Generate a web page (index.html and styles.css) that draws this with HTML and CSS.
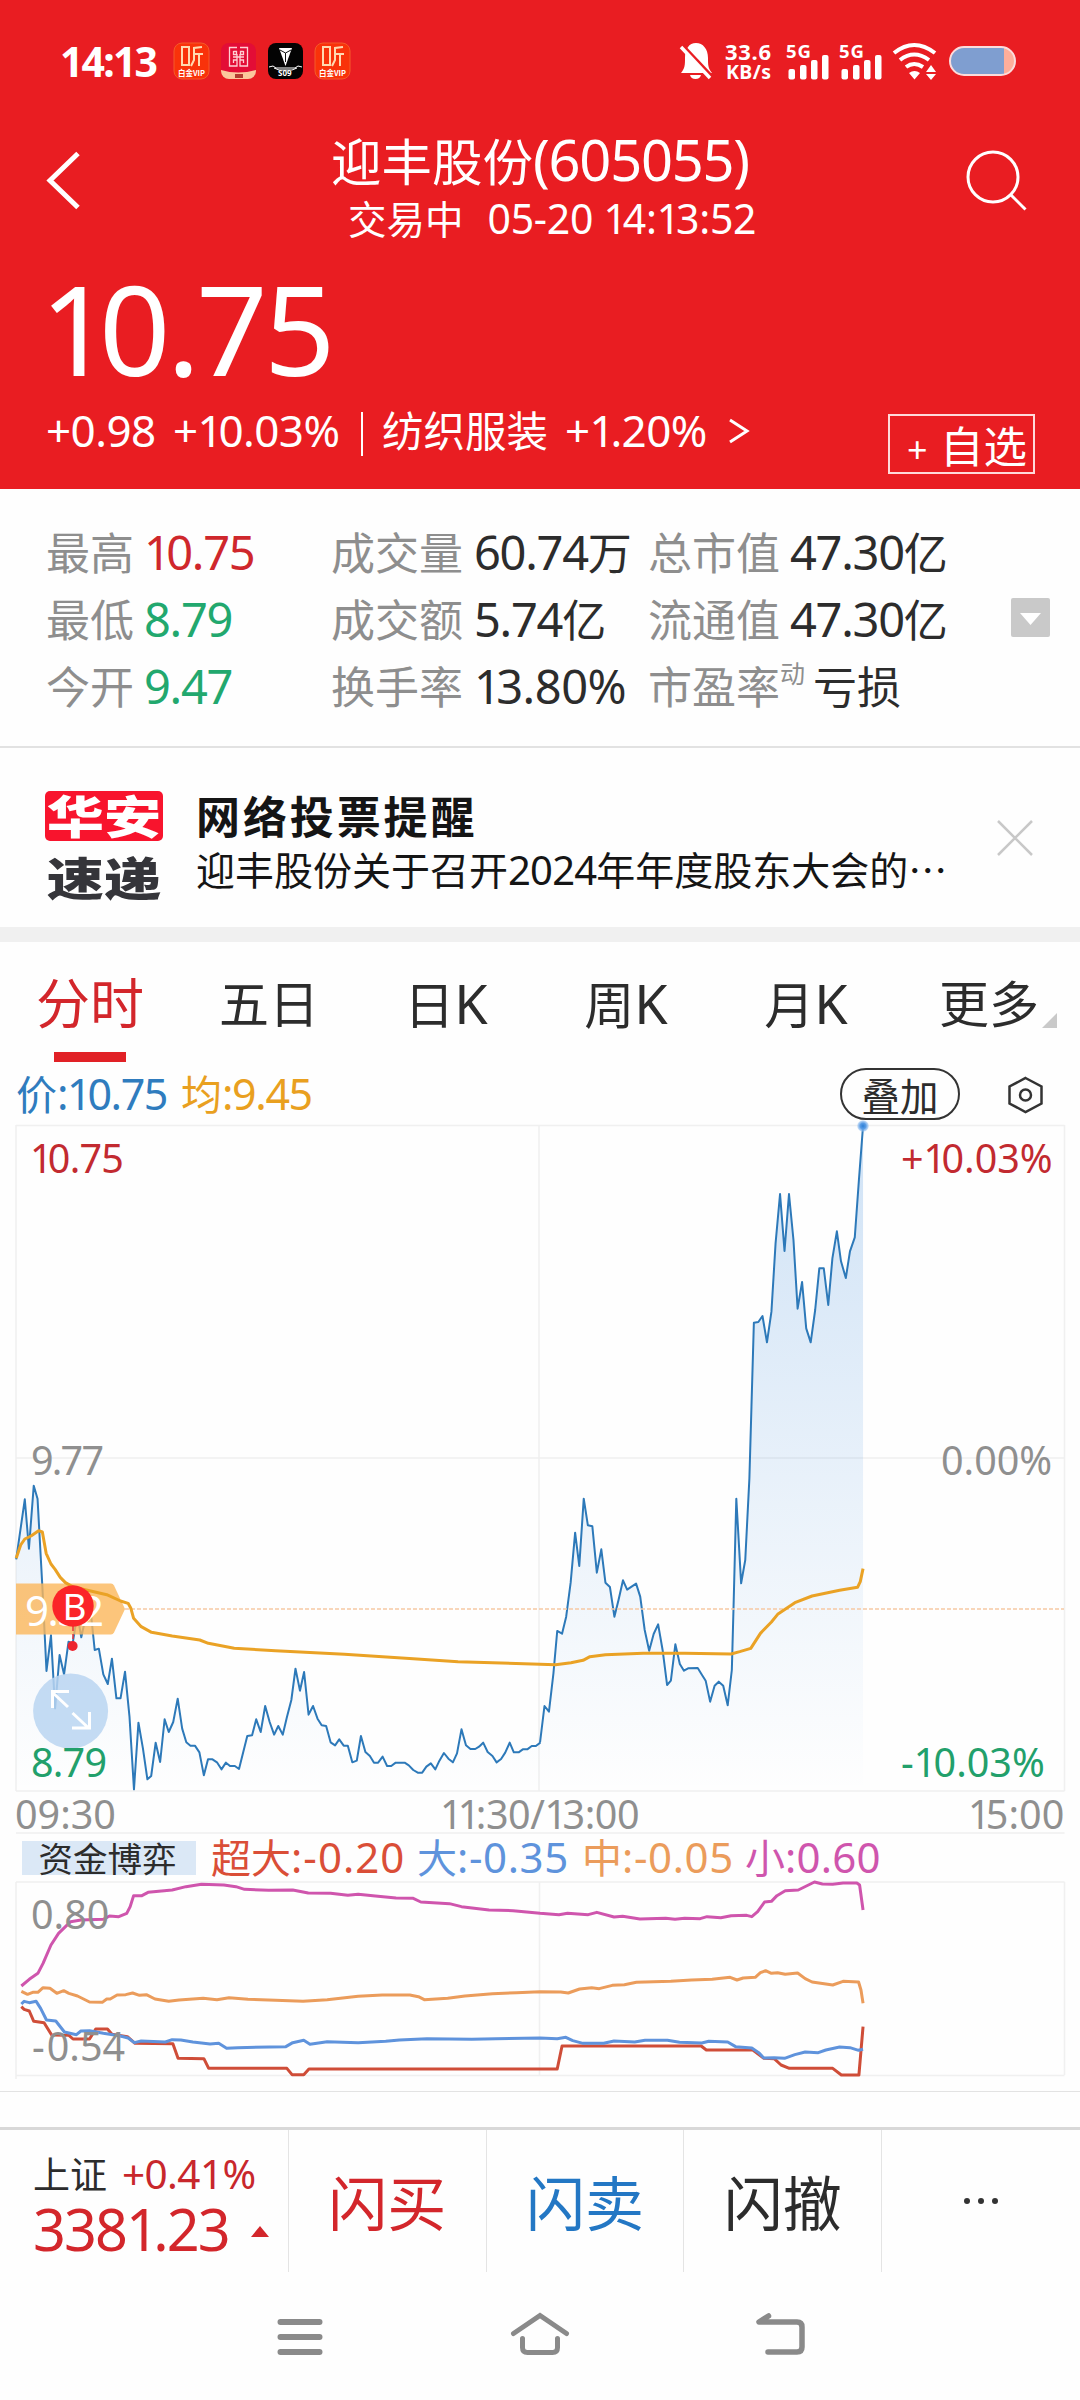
FILE: index.html
```html
<!DOCTYPE html>
<html lang="zh-CN">
<head>
<meta charset="utf-8">
<title>迎丰股份(605055)</title>
<link rel="stylesheet" href="styles.css">
</head>
<body>
<header class="header">
  <div class="status">
    <span class="clock n">14:13</span>
    <div class="apps">
      <svg width="35" height="36" viewBox="0 0 35 36"><rect width="35" height="36" rx="8" fill="#f9320a" stroke="#f55a2a"/><path d="M8 4h7v18H8zM28 4l-8 1v12l-3 6M20 11h9M25 11v12" fill="none" stroke="#ffd9b0" stroke-width="2"/><text x="4" y="33" class="vip" textLength="27" lengthAdjust="spacingAndGlyphs">白金VIP</text></svg>
      <svg width="35" height="36" viewBox="0 0 35 36"><defs><clipPath id="app"><rect width="35" height="36" rx="8"/></clipPath></defs><g clip-path="url(#app)"><rect width="35" height="36" fill="#e30d36"/><path d="M0 27q17 5 35 0v9H0z" fill="#fbc79b"/><path d="M16 4.500H8.500v18.500H16v-6h-3.500v3M19 4.500h7.500v18.500H19v-6h3.500v3M12.500 8v3.500h3v-3h-3M22.500 8v3.500h-3v-3h3M12 14h11M16 11v6M19 11v6" fill="none" stroke="#ffd0d4" stroke-width="1.300"/><path d="M14 31h8v4h-8z" fill="#b13c30"/></g></svg>
      <svg width="35" height="36" viewBox="0 0 35 36"><rect width="35" height="36" rx="8" fill="#030303"/><path d="M11 5h13l-6.500 18z" fill="#fff"/><path d="M12 7l5.500 3 5.500-3M17.500 10v9" stroke="#111" fill="none"/><path d="M1 24l4-1 3 2h19l3-2 4 1M6 25l5 2h13l5-2" fill="none" stroke="#fff"/><text x="10" y="33" class="app-no">S09</text></svg>
      <svg width="35" height="36" viewBox="0 0 35 36"><rect width="35" height="36" rx="8" fill="#f9320a" stroke="#f55a2a"/><path d="M8 4h7v18H8zM28 4l-8 1v12l-3 6M20 11h9M25 11v12" fill="none" stroke="#ffd9b0" stroke-width="2"/><text x="4" y="33" class="vip" textLength="27" lengthAdjust="spacingAndGlyphs">白金VIP</text></svg>
    </div>
    <svg class="signals" width="340" height="42" viewBox="678 40 340 42">
      <path d="M681 73c4-5 4-8 4-15 0-9 4-15 11-15s12 6 12 15c0 7 0 10 4 15z" fill="#fff"/>
      <path d="M690 75h11q-1 4-5.500 4t-5.500-4z" fill="#fff"/>
      <path d="M683 46l31 33" stroke="#e91d22" stroke-width="4"/><path d="M681 47l29 31" stroke="#fff" stroke-width="3.500"/>
      <text x="725" y="59.500" class="net" font-size="22" textLength="46">33.6</text>
      <text x="726" y="78.500" class="net" font-size="19.500" textLength="45">KB/s</text>
      <g fill="#fff"><text x="786" y="57.500" class="net" font-size="18.500" textLength="25">5G</text><rect x="788.500" y="69" width="6.500" height="10.500" rx="2"/><rect x="800" y="65" width="6.500" height="14.500" rx="2"/><rect x="811" y="60" width="6.500" height="19.500" rx="2"/><rect x="822" y="55" width="6.500" height="24.500" rx="2"/></g>
      <g transform="translate(53 0)" fill="#fff"><text x="786" y="57.500" class="net" font-size="18.500" textLength="25">5G</text><rect x="788.500" y="69" width="6.500" height="10.500" rx="2"/><rect x="800" y="65" width="6.500" height="14.500" rx="2"/><rect x="811" y="60" width="6.500" height="19.500" rx="2"/><rect x="822" y="55" width="6.500" height="24.500" rx="2"/></g>
      <path d="M894 53q20-16 41 0M900 60q14-11 29 0M906 67q8-6 17 0" fill="none" stroke="#fff" stroke-width="4"/>
      <path d="M909 73q5.500-4 11 0l-5.500 6.500zM926 72h10l-5-7zM926 74h10l-5 6z" fill="#fff"/>
      <rect x="950" y="47" width="65" height="28" rx="14" fill="#feae9b"/><path d="M964 47h40v28h-40a14 14 0 0 1 0-28z" fill="#7f9ed0"/><rect x="950" y="47" width="65" height="28" rx="14" fill="none" stroke="#fbdcdc" stroke-width="2"/>
    </svg>
  </div>
  <div class="titlebar">
    <svg width="100" height="130" viewBox="0 122 100 130"><path d="M78 153.500L50 180.500l28 27" fill="none" stroke="#fff" stroke-width="5"/></svg>
    <div class="titles">
      <h1>迎丰股份<span class="n">(605055)</span></h1>
      <p>交易中<span class="n date">05-20 <i>1</i>4:<i>1</i>3:52</span></p>
    </div>
    <svg width="100" height="130" viewBox="951 122 100 130"><circle cx="993" cy="177" r="25" fill="none" stroke="#fff" stroke-width="3"/><path d="M1011 195l14.500 14.500" stroke="#fff" stroke-width="3"/></svg>
  </div>
  <div class="price n"><i>1</i>0.75</div>
  <div class="change">
    <span class="n">+0.98</span>
    <span class="n">+<i>1</i>0.03%</span>
    <span class="bar"></span>
    <span>纺织服装</span>
    <span class="n">+<i>1</i>.20%</span>
    <svg width="24" height="40" viewBox="728 410 24 40"><path d="M731 420l17 11-17 11" fill="none" stroke="#fff" stroke-width="3"/></svg>
    <button><span class="plus n">+</span>自选</button>
  </div>
</header>

<section class="stats">
  <dl>
    <dt>最高</dt><dd class="n red"><i>1</i>0.75</dd><dt>成交量</dt><dd><span class="n">60.74</span>万</dd><dt>总市值</dt><dd><span class="n">47.30</span>亿</dd>
    <dt>最低</dt><dd class="n green">8.79</dd><dt>成交额</dt><dd><span class="n">5.74</span>亿</dd><dt>流通值</dt><dd><span class="n">47.30</span>亿</dd>
    <dt>今开</dt><dd class="n green">9.47</dd><dt>换手率</dt><dd class="n rate"><i>1</i>3.80%</dd><dt>市盈率<sup>动</sup></dt><dd class="loss">亏损</dd>
  </dl>
  <svg width="39" height="39" viewBox="0 0 39 39"><rect width="39" height="39" rx="2" fill="#c9c9c9"/><path d="M9 15h21l-10.500 12z" fill="#fff"/></svg>
</section>

<section class="notice">
  <div class="logo"><b><span>华安</span></b><b><span>速递</span></b></div>
  <div class="message">
    <h2>网络投票提醒</h2>
    <p>迎丰股份关于召开<span class="n">2024</span>年年度股东大会的…</p>
  </div>
  <svg width="36" height="36" viewBox="0 0 36 36"><path d="M1 1l34 34M35 1L1 35" stroke="#c8c8c8" stroke-width="2.500"/></svg>
</section>

<nav class="tabs">
  <a class="active">分时</a><a>五日</a><a class="k">日<span class="n">K</span></a><a class="k">周<span class="n">K</span></a><a class="k">月<span class="n">K</span></a>
  <a>更多<svg width="15" height="15" viewBox="0 0 15 15"><path d="M15 0v15H0z" fill="#c9c9c9"/></svg></a>
</nav>

<div class="legend">
  <span class="blue">价<span class="n">:<i>1</i>0.75</span></span>
  <span class="amber">均<span class="n">:9.45</span></span>
  <button>叠加</button>
  <svg width="36" height="38" viewBox="1008 1075 36 38"><path d="M1025.500 1077l16 8.500v17l-16 8.500-16-8.500v-17z" fill="none" stroke="#333" stroke-width="2.500"/><circle cx="1025.500" cy="1094" r="5.500" fill="none" stroke="#333" stroke-width="2.500"/></svg>
</div>

<svg class="chart" width="1080" height="714" viewBox="0 1120 1080 714">
  <defs>
    <linearGradient id="fade" gradientUnits="userSpaceOnUse" x1="0" y1="-942" x2="0" y2="1053"><stop offset="0" stop-color="#2b80d8" stop-opacity=".22"/><stop offset="1" stop-color="#2b80d8" stop-opacity="0"/></linearGradient>
    <radialGradient id="glow"><stop offset="0" stop-color="#2d7fd6"/><stop offset=".5" stop-color="#5a9de6"/><stop offset="1" stop-color="#9cc5f2" stop-opacity=".5"/></radialGradient>
  </defs>
  <path class="grid" d="M16 1125.500H1064.500M16 1458H1064.500M16 1791H1064.500M16 1833H1064.500M16 1125V1791M539 1125V1791M1064.500 1125V1791"/>
  <g transform="translate(0 1440) scale(.34439 .33333)">
    <path fill="url(#fade)" d="M47 358L72 178 84 326 98 137 109 176 123 440 135 693 148 586 160 805 173 645 186 703 199 605 211 610 218 565 224 520 236 592 249 530 262 500 275 630 287 626 300 703 313 732 325 656 338 775 350 775 363 695 376 830 389 1048 402 848 415 925 428 1018 439 1008 452 908 465 966 478 838 490 876 503 846 516 776 529 866 541 907 566 917 579 937 592 1006 604 958 617 958 643 988 656 968 694 987 718 888 732 886 744 838 757 876 770 798 796 884 808 858 821 884 846 780 858 686 871 752 883 696 896 824 909 798 922 836 947 858 960 907 973 916 985 898 1010 917 1023 967 1036 962 1048 888 1061 936 1098 968 1111 950 1124 978 1175 968 1213 998 1251 970 1264 988 1289 939 1315 967 1327 940 1340 868 1353 916 1380 927 1403 908 1442 967 1480 908 1492 937 1568 908V1053H47z"/>
    <path class="line price-line" d="M47 358L72 178 84 326 98 137 109 176 123 440 135 693 148 586 160 805 173 645 186 703 199 605 211 610 218 565 224 520 236 592 249 530 262 500 275 630 287 626 300 703 313 732 325 656 338 775 350 775 363 695 376 830 389 1048 402 848 415 925 428 1018 439 1008 452 908 465 966 478 838 490 876 503 846 516 776 529 866 541 907 553 917 566 917 579 937 592 1006 604 958 617 958 630 967 643 988 656 968 668 978 682 978 694 987 718 888 732 886 744 838 757 876 770 798 783 846 796 884 808 858 821 884 833 832 846 780 858 686 871 752 883 696 896 824 909 798 922 836 934 856 947 858 960 907 973 916 985 898 998 917 1010 917 1023 967 1036 962 1048 888 1061 936 1074 948 1086 968 1098 968 1111 950 1124 978 1136 978 1149 968 1175 968 1187 976 1200 990 1213 998 1226 998 1238 980 1251 970 1264 988 1276 962 1289 939 1302 956 1315 967 1327 940 1340 868 1353 916 1366 927 1380 927 1391 920 1403 908 1416 936 1430 948 1442 967 1455 957 1467 938 1480 908 1492 937 1506 937 1518 928 1531 928 1544 918 1556 918 1569 908"/>
    <g transform="translate(1568 0)">
      <path fill="url(#fade)" d="M0 908L13 798 26 815 39 700 50 573 64 581 76 530 89 428 102 278 114 378 127 176 139 256 152 259 165 398 178 328 190 428 203 441 216 530 228 480 241 421 253 449 279 431 291 470 304 570 317 632 330 582 343 553 356 630 369 735 380 722 393 613 406 672 418 692 430 685 458 684 470 704 481 722 494 785 507 737 519 725 532 737 545 796 557 690 562 500 570 176 584 430 596 360 608 115 614 -100 621 -352 634 -354 646 -372 659 -293 672 -385 684 -590 697 -738 710 -567 723 -738 736 -600 748 -394 761 -474 773 -335 786 -293 799 -390 811 -515 824 -515 837 -405 849 -545 862 -626 874 -536 888 -486 900 -566 914 -608 926 -780 938 -942V1053H0z"/>
      <path class="line price-line" d="M0 908L13 798 26 815 39 700 50 573 64 581 76 530 89 428 102 278 114 378 127 176 139 256 152 259 165 398 178 328 190 428 203 441 216 530 228 480 241 421 253 449 279 431 291 470 304 570 317 632 330 582 343 553 356 630 369 735 380 722 393 613 406 672 418 692 430 685 458 684 470 704 481 722 494 785 507 737 519 725 532 737 545 796 557 690 562 500 570 176 584 430 596 360 608 115 614 -100 621 -352 634 -354 646 -372 659 -293 672 -385 684 -590 697 -738 710 -567 723 -738 736 -600 748 -394 761 -474 773 -335 786 -293 799 -390 811 -515 824 -515 837 -405 849 -545 862 -626 874 -536 888 -486 900 -566 914 -608 926 -780 938 -942"/>
    </g>
  </g>
  <path d="M125 1609H1064" stroke="#f6c9a4" stroke-width="1.500" stroke-dasharray="4 2"/>
  <path d="M16 1583.500h95q2 0 3 2l11 23.500-11 23.500q-1 2-3 2H16z" fill="#fbb75a" fill-opacity=".8"/>
  <text x="25" y="1626" class="num" fill="#fff" font-size="42" textLength="79">9.32</text>
  <g transform="translate(0 1440) scale(.34439 .33333)">
    <path class="line avg-line" d="M47 355L60 315 72 297 90 288 112 272 123 276 134 340 148 372 160 388 175 412 190 428 210 440 260 452 310 464 350 483 372 490 380 505 388 535 410 560 440 577 500 588 580 600 605 610 680 625 800 632 1000 643 1200 656 1330 665 1568 673 1613 674 1658 668 1693 661 1713 650 1758 644 1868 640 1988 640 2123 642 2148 635 2180 625 2208 580 2240 546 2258 523 2308 488 2358 468 2438 451 2490 442 2498 425 2506 386"/>
  </g>
  <circle cx="70.600" cy="1711" r="37.500" fill="#bad5f1" fill-opacity=".85"/>
  <path d="M68 1707l-16-15M52.500 1708v-16.500H69M72.500 1713l16 15M72 1728h17.500v-16" fill="none" stroke="#fff" stroke-width="3"/>
  <path d="M73 1626v18" stroke="#e5333b" stroke-width="1.500" stroke-dasharray="5 3"/><circle cx="72.600" cy="1646" r="5" fill="#ed2630"/>
  <circle cx="73" cy="1606" r="20.700" fill="#fb2428"/><text x="74.500" y="1620" class="num" fill="#fff" font-size="37" text-anchor="middle">B</text>
  <circle cx="863" cy="1126" r="5.800" fill="url(#glow)"/>
  <g class="num" font-size="39.500">
    <g fill="#c22a30"><text x="30" y="1172.500" class="tight"><tspan class="o">1</tspan>0.75</text><text x="901" y="1172.500">+<tspan class="o">1</tspan>0.03%</text></g>
    <g fill="#8f8f8f"><text x="31" y="1474.500" textLength="73">9.77</text><text x="941" y="1474.500">0.00%</text><text x="15" y="1828.500">09:30</text><text x="440" y="1828.500" class="slim"><tspan class="o">11</tspan>:30/<tspan class="o">1</tspan>3:00</text><text x="968" y="1828.500"><tspan class="o">1</tspan>5:00</text></g>
    <g fill="#22a06b"><text x="31" y="1776.500" textLength="76">8.79</text><text x="901" y="1776.500">-<tspan class="o">1</tspan><tspan dx="2">0.03%</tspan></text></g>
  </g>
</svg>

<div class="funds">
  <span class="tag">资金博弈</span>
  <span class="huge">超大<span class="n">:-0.20</span></span>
  <span class="large">大<span class="n">:-0.35</span></span>
  <span class="mid">中<span class="n">:-0.05</span></span>
  <span class="small">小<span class="n">:0.60</span></span>
</div>

<svg class="chart" width="1080" height="211" viewBox="0 1881 1080 211">
  <path class="grid" d="M16 1882H1064.500M16 2075.500H1064.500M16 1882V2079M539.500 1882V2075M1064.500 1882V2075"/>
  <path d="M0 2091.500H1080" stroke="#e3e3e3"/>
  <g transform="translate(0 1830) scale(.34439 .33333)">
    <path class="line fund" stroke="#cf4d38" d="M62 530L70 538 85 543 98 574 128 578 150 615 200 616 212 627 260 627 278 597 312 597 325 613 370 620 392 640 502 641 517 685 592 686 606 715 833 715 848 734 882 734 897 717 1618 717 1632 648 2036 648 2051 660 2186 660 2218 685 2248 686 2268 705 2292 715 2418 715 2443 735 2494 735 2506 590"/>
    <path class="line fund" stroke="#5f93dc" d="M62 522L70 514 85 518 105 514 118 535 135 570 162 573 187 606 222 614 235 603 260 602 300 610 350 618 372 624 390 638 410 633 480 636 500 629 525 630 560 636 610 642 635 640 658 655 690 653 830 650 850 638 882 631 900 643 950 635 1040 638 1120 634 1160 630 1240 626 1370 628 1440 626 1568 624 1618 626 1643 622 1663 632 1693 640 1753 640 1783 633 1843 636 1873 631 1938 631 1973 637 2038 639 2058 634 2113 636 2136 650 2183 654 2203 668 2218 684 2248 683 2278 685 2308 674 2338 666 2376 668 2398 660 2438 651 2468 653 2493 661 2506 658"/>
    <path class="line fund" stroke="#eb9c5b" d="M62 484L80 493 95 487 110 487 125 473 145 475 165 490 185 482 200 490 225 498 260 516 297 517 310 507 320 507 340 495 365 494 385 489 405 496 425 494 450 507 490 514 520 510 590 505 630 509 665 503 720 508 800 511 880 514 950 509 1040 499 1110 495 1190 495 1215 500 1232 509 1300 505 1350 498 1430 491 1500 488 1568 485 1628 486 1650 489 1683 477 1718 473 1740 476 1778 466 1813 464 1848 457 1948 454 2008 450 2068 448 2120 442 2140 450 2158 444 2193 442 2208 428 2223 422 2240 430 2258 428 2280 433 2316 429 2338 446 2358 456 2418 465 2448 454 2493 456 2500 480 2506 520"/>
    <path class="line fund" stroke="#cf55ad" d="M62 468L85 448 110 430 125 400 148 345 170 310 205 275 235 270 300 268 318 258 345 260 368 250 378 230 388 197 412 197 430 187 500 180 540 170 585 163 650 165 685 170 710 178 780 181 850 180 895 189 960 190 1010 196 1040 193 1090 198 1150 204 1200 205 1222 216 1305 221 1340 230 1420 240 1490 242 1568 250 1623 254 1648 250 1708 254 1733 247 1783 261 1808 259 1858 267 1933 265 1960 268 1988 265 2033 266 2053 260 2093 263 2123 257 2168 256 2183 260 2200 245 2220 216 2240 214 2256 197 2280 182 2318 180 2365 156 2388 162 2418 163 2448 159 2488 159 2496 165 2506 240"/>
  </g>
  <g class="num" font-size="39.500" fill="#8f8f8f"><text x="31" y="1929">0.80</text><text x="32" y="2061">-<tspan dx="2">0.54</tspan></text></g>
</svg>

<footer class="actions">
  <div class="index">
    <p class="index-name">上证<span class="n">+0.41%</span></p>
    <p class="index-value n">338<i>1</i>.23<svg width="18" height="11" viewBox="0 0 18 11"><path d="M9 0l9 11H0z" fill="#d3262b"/></svg></p>
  </div>
  <a class="buy">闪买</a><a class="sell">闪卖</a><a>闪撤</a>
  <a class="more"><svg width="36" height="8" viewBox="0 0 36 8"><g fill="#333"><circle cx="4" cy="4" r="3"/><circle cx="18" cy="4" r="3"/><circle cx="32" cy="4" r="3"/></g></svg></a>
</footer>

<nav class="system">
  <svg width="240" height="60" viewBox="180 2304 240 60"><path d="M280.500 2322H319.500M280.500 2337H319.500M280.500 2352H319.500" stroke="#8a8a8a" stroke-width="6" stroke-linecap="round"/></svg>
  <svg width="240" height="60" viewBox="420 2304 240 60"><path d="M513.500 2333.500L540 2315.500l26.500 18M522.500 2338.500v9q0 5 5 5h25q5 0 5-5v-9" fill="none" stroke="#8a8a8a" stroke-width="5" stroke-linecap="round"/></svg>
  <svg width="240" height="60" viewBox="660 2304 240 60"><path d="M768.500 2316l-9.500 6h38q5 0 5 5v20q0 5-5 5h-29" fill="none" stroke="#8a8a8a" stroke-width="5.500" stroke-linecap="round" stroke-linejoin="round"/></svg>
</nav>
</body>
</html>
```
FILE: styles.css
```css
* { box-sizing: border-box; margin: 0; padding: 0; }
body { width: 1080px; height: 2400px; background: #fefefe; color: #2c2c2c; font-family: "Noto Sans CJK SC", sans-serif; line-height: 1; white-space: nowrap; overflow: hidden; }
svg { display: block; flex: none; overflow: visible; }
button { font: inherit; background: none; border: 0; color: inherit; white-space: nowrap; }
i { font-style: normal; letter-spacing: -.1em; }
.n, .num { font-family: "Noto Sans", "Noto Sans CJK SC", sans-serif; }
.n { letter-spacing: -.02em; }

.header { height: 489px; background: #e91d22; color: #fff; }
.status { display: flex; align-items: center; height: 122px; padding: 0 62px 0 60px; }
.clock { width: 114px; font-size: 41px; font-weight: 700; letter-spacing: -.045em; }
.apps { display: flex; gap: 12px; }
.vip { font: 700 8px "Noto Sans CJK SC", sans-serif; fill: #fff; }
.app-no { font: 700 8px "Noto Sans", sans-serif; fill: #fff; }
.net { font-family: "Noto Sans", sans-serif; font-weight: 700; fill: #fff; }
.signals { margin-left: auto; }

.titlebar { display: grid; grid-template-columns: 100px 1fr 100px; padding-right: 29px; height: 130px; }
.titles { padding-top: 9px; }
h1 { height: 67px; padding-left: 231px; font-size: 50.500px; font-weight: 400; }
h1 .n { font-size: 56px; letter-spacing: -.022em; }
.titles p { display: flex; align-items: baseline; padding-left: 248px; font-size: 38.500px; }
.date { margin-left: 24px; font-size: 41px; letter-spacing: -.007em; }

.price { height: 138px; padding: 13px 0 0 40px; font-size: 125px; letter-spacing: -.031em; }
.change { display: grid; grid-template-columns: 127px 188px 21px 183px 162px 160px 147px; align-items: baseline; height: 99px; padding: 18px 0 0 46px; font-size: 41.500px; }
.change .n { font-size: 44px; letter-spacing: -.013em; }
.bar { align-self: start; width: 2px; height: 44px; margin-top: 4px; background: #fff; }
.change svg { align-self: start; margin-top: 2px; }
.change button { display: flex; align-self: start; align-items: baseline; width: 147px; height: 60px; margin: 6px 0 0 1px; padding: 7px 0 0 17px; border: 2px solid #ffdada; font-size: 43.500px; }
.change .plus { width: 33px; font-size: 36px; text-align: left; }

.stats { display: flex; height: 259px; padding: 40px 30px 0 46px; border-bottom: 2px solid #e2e2e2; }
dl { display: grid; flex: 1; grid-template-columns: 99px 186px 144px 173px 143px 1fr; grid-auto-rows: 67px; align-items: baseline; font-size: 44px; }
dt { color: #8e8e8e; }
dd.n, dd .n { font-size: 47px; letter-spacing: -.027em; }
dd { margin-left: -1px; }
dd.rate { letter-spacing: -.01em; }
sup { display: inline-block; width: 0; font-size: 25px; line-height: 0; vertical-align: 21px; }
.loss { padding-left: 23px; }
.stats > svg { margin-top: 69px; }
.red { color: #cf272c; }
.green { color: #22a86e; }

.notice { display: flex; height: 194px; padding: 43px 47px 0 45px; border-bottom: 15px solid #f0f0f0; color: #151515; }
.logo { width: 118px; }
.logo b { display: block; height: 50px; border-radius: 5px; color: #35353a; font-size: 45px; font-weight: 900; line-height: 47px; }
.logo b:first-child { margin-bottom: 12px; background: #f8142d; color: #fff; }
.logo span { display: block; width: 90px; margin-left: 14px; transform: scaleX(1.270); }
.message { flex: 1; padding-left: 33px; }
h2 { height: 58px; font-size: 44px; font-weight: 700; letter-spacing: 2.900px; padding-top: 2px; }
.message p { font-size: 39px; }
.message .n { font-size: 40px; }
.notice > svg { margin-top: 29px; }

.tabs { display: flex; height: 120px; }
.tabs a { position: relative; width: 180px; padding: 34px 2px 0 0; font-size: 50px; text-align: center; }
.tabs .k { padding-right: 9px; }
.tabs .n { font-size: 54px; }
.tabs a.active { color: #d3262b; font-size: 54px; padding: 32px 0 0; }
.tabs .active::after { content: ""; position: absolute; left: 54px; bottom: 0; width: 72px; height: 10px; background: #e12126; }
.tabs svg { position: absolute; right: 23px; top: 71px; }

.legend { display: grid; grid-template-columns: 165px 659px 168px 36px; height: 58px; padding: 6px 0 0 16px; font-size: 41px; }
.legend > span { padding-top: 4px; }
.legend .n { font-size: 43px; letter-spacing: -.033em; }
.blue { color: #2f7cbe; }
.amber { color: #e9a01f; }
.legend button { width: 120px; height: 52px; border: 2.500px solid #333; border-radius: 26px; font-size: 38.500px; line-height: 46px; }
.legend svg { margin-top: 8px; }

.grid { fill: none; stroke: #f0f0f0; stroke-width: 1.500; }
.line { fill: none; stroke-linejoin: round; vector-effect: non-scaling-stroke; }
.price-line { stroke: #2d79b9; stroke-width: 2; }
.avg-line { stroke: #eaa225; stroke-width: 3; }
.fund { stroke-width: 3; }
.tight { letter-spacing: -.02em; }
.slim { letter-spacing: -.01em; }
.o { letter-spacing: -.12em; }

.funds { display: grid; grid-template-columns: 189px 206px 165px 163px 1fr; height: 47px; padding: 2px 0 0 22px; font-size: 40px; }
.funds .n { font-size: 42px; letter-spacing: .015em; }
.funds .huge .n { letter-spacing: .025em; }
.tag { width: 174px; height: 34px; margin-top: 5px; padding-right: 3px; background: #dbe8f6; font-size: 34.500px; line-height: 33px; text-align: center; }
.huge { color: #da4e37; }
.large { color: #5e93dc; }
.mid { color: #eb9c5b; }
.funds .small .n { letter-spacing: .005em; }
.small { color: #cf55ad; }

.actions { display: flex; height: 145px; margin-top: 35px; border-top: 3px solid #d8d8d8; }
.index { width: 289px; padding: 24px 0 0 33px; border-right: 1px solid #e4e4e4; }
.index-name { display: flex; align-items: baseline; font-size: 37px; height: 47px; }
.index-name .n { margin-left: 15px; color: #c8272c; font-size: 40.500px; letter-spacing: -.015em; }
.index-value { display: flex; align-items: baseline; color: #d3262b; font-size: 57.500px; letter-spacing: -.033em; }
.index-value svg { margin: 0 19px 22px auto; align-self: flex-end; }
.actions > a { width: 198px; border-right: 1px solid #e4e4e4; font-size: 59px; line-height: 142px; text-align: center; }
.actions .buy { color: #d3262b; }
.actions .sell { color: #2377c4; }
.actions .more { display: flex; align-items: center; justify-content: center; border: 0; }
.system { display: flex; justify-content: center; padding-top: 32px; }
```
